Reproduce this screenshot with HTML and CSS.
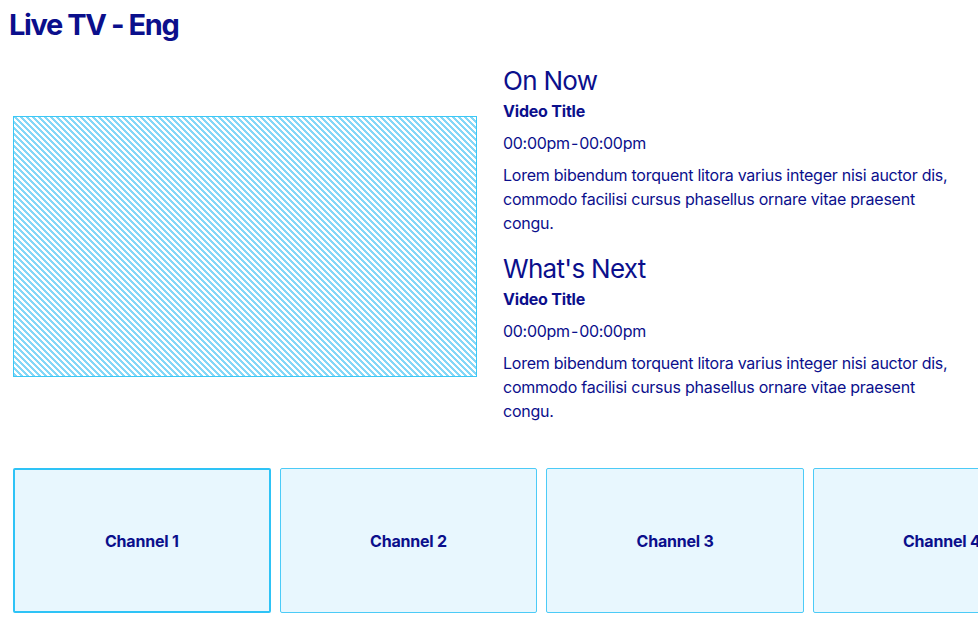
FILE: index.html
```html
<!DOCTYPE html>
<html lang="en">
<head>
<meta charset="utf-8">
<title>Live TV - Eng</title>
<link rel="stylesheet" href="styles.css">
</head>
<body>
<div class="page">
  <h1 class="page-title">Live TV - Eng</h1>
  <section class="hero">
    <div class="player"></div>
    <div class="info">
      <h2 class="info-heading">On Now</h2>
      <p class="video-title">Video Title</p>
      <p class="video-time">00:00pm - 00:00pm</p>
      <p class="video-desc">Lorem bibendum torquent litora varius integer nisi auctor dis, commodo facilisi cursus phasellus ornare vitae praesent congu.</p>
      <h2 class="info-heading next">What's Next</h2>
      <p class="video-title">Video Title</p>
      <p class="video-time">00:00pm - 00:00pm</p>
      <p class="video-desc">Lorem bibendum torquent litora varius integer nisi auctor dis, commodo facilisi cursus phasellus ornare vitae praesent congu.</p>
    </div>
  </section>
  <section class="channels">
    <div class="channel active">Channel 1</div>
    <div class="channel">Channel 2</div>
    <div class="channel">Channel 3</div>
    <div class="channel">Channel 4</div>
  </section>
</div>
</body>
</html>
```

FILE: styles.css
```css
* { box-sizing: border-box; }
html, body { margin: 0; padding: 0; }
body {
  font-family: Inter, "Liberation Sans", sans-serif;
  color: #0b0f8c;
  background: #fff;
  overflow: hidden;
}
.page {
  width: 978px;
  height: 625px;
  overflow: hidden;
}
.page-title {
  margin: 0;
  padding: 6px 0 0 9px;
  font-size: 29px;
  font-weight: 700;
  letter-spacing: -1.4px;
  line-height: 38px;
}
.hero {
  display: flex;
  align-items: center;
  gap: 26px;
  padding: 20px 0 0 13px;
}
.player {
  flex: 0 0 464px;
  height: 261px;
  margin-top: 6px;
  border: 1px solid #3cc8f6;
  background-color: #ffffff;
  background-image: linear-gradient(45deg,
    #84d7f7 25%, #ffffff 25%, #ffffff 50%,
    #84d7f7 50%, #84d7f7 75%, #ffffff 75%);
  background-size: 6px 6px;
}
.info {
  flex: 1;
  min-width: 0;
  padding-right: 10px;
}
.info-heading {
  margin: 0;
  font-size: 26px;
  font-weight: 400;
  line-height: 34px;
  letter-spacing: -0.7px;
}
.info-heading.next { margin-top: 17px; }
.video-title {
  margin: 1px 0 0;
  font-size: 16px;
  font-weight: 700;
  line-height: 24px;
  letter-spacing: -0.2px;
}
.video-time {
  margin: 8px 0 0;
  font-size: 16px;
  line-height: 24px;
  letter-spacing: -0.3px;
  word-spacing: -3px;
}
.video-desc {
  margin: 8px 0 0;
  font-size: 16px;
  line-height: 24px;
  letter-spacing: -0.25px;
}
.channels {
  display: flex;
  gap: 9px;
  padding: 45px 0 0 13px;
}
.channel {
  flex: 0 0 257.67px;
  height: 145px;
  border: 1px solid #4ccbf7;
  border-radius: 2px;
  background: #e8f7fe;
  display: flex;
  align-items: center;
  justify-content: center;
  font-size: 16px;
  font-weight: 700;
  letter-spacing: -0.2px;
}
.channel.active {
  border: 2px solid #2ec3f6;
}
```
